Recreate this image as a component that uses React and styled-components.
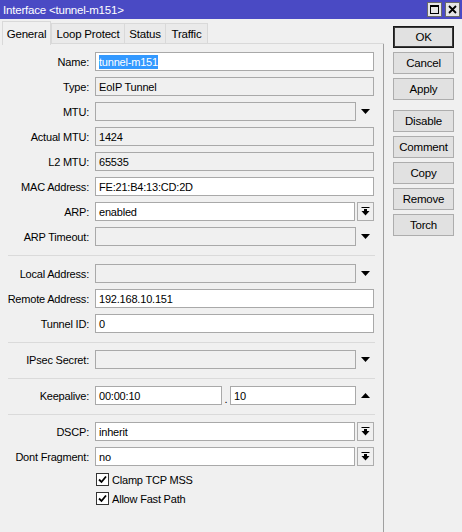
import React from "react";
import styled, { createGlobalStyle } from "styled-components";

const GlobalStyle = createGlobalStyle`
  html, body {
    margin: 0;
    padding: 0;
    background: #f0f0f0;
  }
  * {
    box-sizing: border-box;
  }
`

const Window = styled.div`
  width: 462px;
  height: 532px;
  overflow: hidden;
  background: #f0f0f0;
  font-family: "Liberation Sans", Arial, sans-serif;
  font-size: 11px;
  letter-spacing: -0.2px;
  color: #000;
  display: flex;
  flex-direction: column;
`
const TitleBar = styled.div`
  height: 19px;
  background: #4a4ac4;
  color: #fff;
  display: flex;
  align-items: center;
  justify-content: space-between;
  padding: 0 2px 0 3px;
  font-size: 11.5px;
`
const TitleButtons = styled.div`
  display: flex;
  gap: 3px;
`
const TitleButton = styled.div`
  width: 15px;
  height: 15px;
  background: #e6e6e6;
  border: 1px solid #6a6a6a;
  display: flex;
  align-items: center;
  justify-content: center;
`
const Body = styled.div`
  flex: 1;
  display: flex;
`
const LeftSide = styled.div`
  width: 384px;
  display: flex;
  flex-direction: column;
`
const TabRow = styled.div`
  height: 25px;
  display: flex;
  align-items: flex-end;
  padding-left: 2px;
`
const Tab = styled.div`
  height: ${props => props.active ? "24px" : "21px"};
  width: ${props => props.w}px;
  display: flex;
  align-items: center;
  justify-content: center;
  border: 1px solid #d9d9d9;
  border-bottom: ${props => props.active ? "none" : "1px solid #d9d9d9"};
  border-right: ${props => props.last || props.active ? "1px solid #d9d9d9" : "none"};
  background: ${props => props.active ? "#f0f0f0" : "#eaeaea"};
  margin-bottom: ${props => props.active ? "-1px" : "0"};
  position: relative;
  z-index: ${props => props.active ? 1 : 0};
  font-size: 11.5px;
`
const TabFill = styled.div`
  flex: 1;
  height: 1px;
  background: #d9d9d9;
`
const Panel = styled.div`
  flex: 1;
  border-right: 1px solid #a0a0a0;
  padding-top: 5px;
`
const Row = styled.div`
  height: 25px;
  display: flex;
  align-items: center;
`
const Label = styled.div`
  width: 89px;
  text-align: right;
  white-space: nowrap;
  margin-right: 6px;
`
const Box = styled.div`
  width: ${props => props.w}px;
  height: 19px;
  border: 1px solid #a9a9a9;
  background: ${props => props.readOnly ? "#f0f0f0" : "#fff"};
  display: flex;
  align-items: center;
  padding-left: 3px;
  white-space: nowrap;
  overflow: hidden;
`
const Selected = styled.span`
  background: #3399ff;
  color: #fff;
  padding: 1px 0;
`
const ArrowArea = styled.div`
  width: 18px;
  height: 19px;
  display: flex;
  align-items: center;
  justify-content: center;
`
const ComboButton = styled.div`
  width: 17px;
  height: 19px;
  margin-left: 2px;
  border: 1px solid #adadad;
  background: #f0f0f0;
  display: flex;
  align-items: center;
  justify-content: center;
`
const Dot = styled.div`
  width: 8px;
  text-align: center;
  align-self: flex-end;
  padding-bottom: 3px;
`
const Separator = styled.div`
  height: ${props => props.h || 11}px;
  padding-top: 6px;
  padding-left: 8px;
  padding-right: 8px;

  &::before {
    content: "";
    display: block;
    height: 1px;
    background: #dadada;
  }
`
const CheckRow = styled.label`
  height: 19px;
  display: flex;
  align-items: center;
  padding-left: 96px;
  gap: 3px;
  margin-top: ${props => props.first ? 1 : 0}px;
`
const CheckBox = styled.div`
  width: 13px;
  height: 13px;
  border: 1px solid #333;
  background: #fff;
  display: flex;
  align-items: center;
  justify-content: center;
`
const RightSide = styled.div`
  display: flex;
  flex-direction: column;
  padding: 7px 0 0 9px;
`
const Button = styled.div`
  width: 61px;
  height: 22px;
  display: flex;
  align-items: center;
  justify-content: center;
  background: #e1e1e1;
  border: 1px solid ${props => props.primary ? "#1a1a1a" : "#adadad"};
  box-shadow: ${props => props.primary ? "inset 0 0 0 1px #3a3a3a" : "none"};
  margin-bottom: ${props => props.gapAfter ? 10 : 4}px;
  font-size: 11.5px;
`

const DownArrow = () => (
  <svg width="9" height="5" viewBox="0 0 9 5"><polygon points="0,0 9,0 4.5,5" fill="#000" /></svg>
)
const UpArrow = () => (
  <svg width="9" height="5" viewBox="0 0 9 5"><polygon points="0,5 9,5 4.5,0" fill="#000" /></svg>
)
const ComboIcon = () => (
  <svg width="9" height="9" viewBox="0 0 9 9">
    <rect x="0.5" y="0" width="8" height="1" fill="#000" />
    <rect x="3" y="2" width="3" height="3" fill="#000" />
    <polygon points="0.5,4 8.5,4 4.5,8.5" fill="#000" />
  </svg>
)
const CheckMark = () => (
  <svg width="9" height="9" viewBox="0 0 9 9">
    <polyline points="1,4.5 3.5,7 8,1.5" fill="none" stroke="#000" strokeWidth="1.8" />
  </svg>
)

const Field = ({ label, value, kind, readOnly, selected }) => {
  let content
  if (kind === "drop") {
    content = <><Box w={261} readOnly={readOnly}>{value}</Box><ArrowArea><DownArrow /></ArrowArea></>
  } else if (kind === "combo") {
    content = <><Box w={260} readOnly={readOnly}>{value}</Box><ComboButton><ComboIcon /></ComboButton></>
  } else {
    content = <Box w={279} readOnly={readOnly}>{selected ? <Selected>{value}</Selected> : value}</Box>
  }
  return (
    <Row>
      <Label>{label}</Label>
      {content}
    </Row>
  )
}

export default function App() {
  const tabs = [
    { name: "General", w: 49, active: true },
    { name: "Loop Protect", w: 73 },
    { name: "Status", w: 41 },
    { name: "Traffic", w: 43, last: true }
  ]
  const buttons = ["OK", "Cancel", "Apply", "Disable", "Comment", "Copy", "Remove", "Torch"]

  return (
    <Window>
      <GlobalStyle />
      <TitleBar>
        <span>Interface &lt;tunnel-m151&gt;</span>
        <TitleButtons>
          <TitleButton>
            <svg width="9" height="9" viewBox="0 0 9 9"><rect x="0.5" y="0.5" width="8" height="8" fill="none" stroke="#000" /><rect x="0" y="0" width="9" height="2" fill="#000" /></svg>
          </TitleButton>
          <TitleButton>
            <svg width="9" height="9" viewBox="0 0 9 9"><path d="M1,1 L8,8 M8,1 L1,8" stroke="#000" strokeWidth="1.8" /></svg>
          </TitleButton>
        </TitleButtons>
      </TitleBar>
      <Body>
        <LeftSide>
          <TabRow>
            {tabs.map(t => (
              <Tab key={t.name} w={t.w} active={t.active} last={t.last}>{t.name}</Tab>
            ))}
            <TabFill />
          </TabRow>
          <Panel>
            <Field label="Name:" value="tunnel-m151" selected />
            <Field label="Type:" value="EoIP Tunnel" readOnly />
            <Field label="MTU:" value="" kind="drop" readOnly />
            <Field label="Actual MTU:" value="1424" readOnly />
            <Field label="L2 MTU:" value="65535" readOnly />
            <Field label="MAC Address:" value="FE:21:B4:13:CD:2D" />
            <Field label="ARP:" value="enabled" kind="combo" />
            <Field label="ARP Timeout:" value="" kind="drop" readOnly />
            <Separator h={12} />
            <Field label="Local Address:" value="" kind="drop" readOnly />
            <Field label="Remote Address:" value="192.168.10.151" />
            <Field label="Tunnel ID:" value="0" />
            <Separator />
            <Field label="IPsec Secret:" value="" kind="drop" readOnly />
            <Separator />
            <Row>
              <Label>Keepalive:</Label>
              <Box w={127}>00:00:10</Box>
              <Dot>.</Dot>
              <Box w={126}>10</Box>
              <ArrowArea><UpArrow /></ArrowArea>
            </Row>
            <Separator />
            <Field label="DSCP:" value="inherit" kind="combo" />
            <Field label="Dont Fragment:" value="no" kind="combo" />
            <CheckRow first>
              <CheckBox><CheckMark /></CheckBox>
              Clamp TCP MSS
            </CheckRow>
            <CheckRow>
              <CheckBox><CheckMark /></CheckBox>
              Allow Fast Path
            </CheckRow>
          </Panel>
        </LeftSide>
        <RightSide>
          {buttons.map(b => (
            <Button key={b} primary={b === "OK"} gapAfter={b === "Apply"}>{b}</Button>
          ))}
        </RightSide>
      </Body>
    </Window>
  )
}
